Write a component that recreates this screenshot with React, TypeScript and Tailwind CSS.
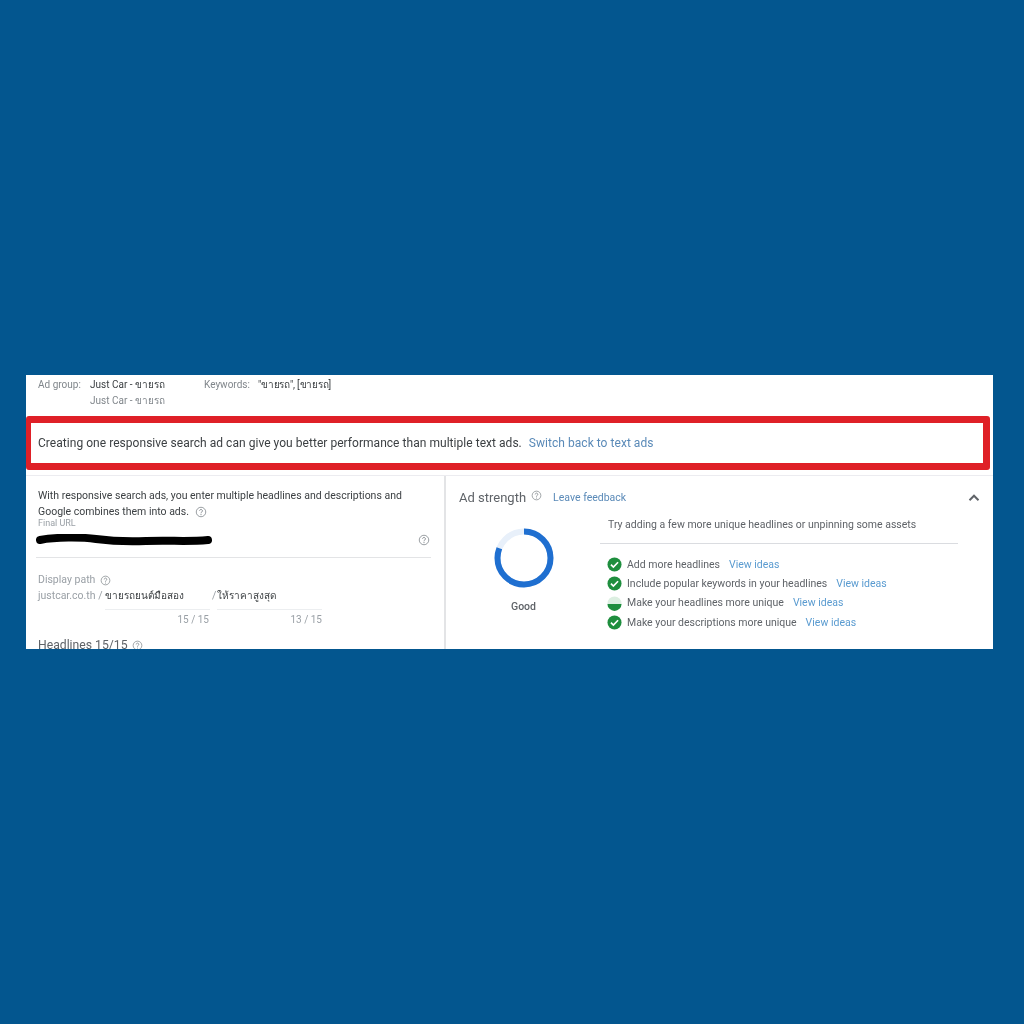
import React from 'react';

const HelpIcon = ({ className }: { className: string }) => (
  <svg viewBox="0 0 24 24" className={className} fill="none" stroke="currentColor">
    <circle cx="12" cy="12" r="9.5" strokeWidth="1.6" />
    <path d="M9.2 9.6a2.8 2.8 0 1 1 4.4 2.3c-1 .7-1.6 1.2-1.6 2.6" strokeWidth="1.8" />
    <circle cx="12" cy="17.2" r="1.1" fill="currentColor" stroke="none" />
  </svg>
);

const CheckIcon = () => (
  <svg viewBox="0 0 16 16" className="w-[15px] h-[15px] shrink-0">
    <circle cx="8" cy="8" r="7.5" fill="#1e8e3e" />
    <path d="M4.2 8.2l2.6 2.6 5-5.2" fill="none" stroke="#fff" strokeWidth="1.8" />
  </svg>
);

const HalfIcon = () => (
  <svg viewBox="0 0 16 16" className="w-[15px] h-[15px] shrink-0">
    <circle cx="8" cy="8" r="7.5" fill="#dcefe1" />
    <path d="M.5 8.4h15a7.5 7.5 0 0 1-15 0z" fill="#1e8e3e" />
  </svg>
);

const checks = [
  { text: 'Add more headlines', half: false },
  { text: 'Include popular keywords in your headlines', half: false },
  { text: 'Make your headlines more unique', half: true },
  { text: 'Make your descriptions more unique', half: false },
];

const App: React.FC = () => {
  return (
    <div className="w-[1024px] h-[1024px] bg-[#03568f] pt-[375px] pl-[26px] font-['Roboto','Noto_Sans_CJK_SC',sans-serif] overflow-hidden">
      <div className="w-[967px] h-[274px] bg-white overflow-hidden blur-[0.5px]">
        {/* ad group row */}
        <div className="h-[41px] pl-[12px] pt-[2px] flex text-[10px] leading-[16px]">
          <span className="w-[52px] text-[#80868b]">Ad group:</span>
          <div className="w-[114px] text-[#3c4043]">
            <div>Just Car - ขายรถ</div>
            <div className="text-[#80868b]">Just Car - ขายรถ</div>
          </div>
          <span className="w-[54px] text-[#80868b]">Keywords:</span>
          <span className="text-[#3c4043] tracking-[-0.2px]">"ขายรถ", [ขายรถ]</span>
        </div>

        {/* red notice */}
        <div className="w-[964px] h-[54px] border-l-[5px] border-r-[7px] border-y-[7px] border-[#df2027] rounded-[3px] pl-[7px] flex items-center text-[12px] text-[#3c4043] tracking-[0.04px]">
          <span>Creating one responsive search ad can give you better performance than multiple text ads.</span>
          <span className="ml-[7px] text-[#5a8ab8]">Switch back to text ads</span>
        </div>

        <div className="flex h-[179px] border-t border-[#ececf0] mt-[5px]">
          {/* left column */}
          <div className="w-[420px] shrink-0 pl-[12px] pr-[11px] pt-[12px] border-r-2 border-[#e3e4e6]">
            <div className="text-[10.5px] leading-[16px] text-[#3c4043] -mb-[2px]">
              With responsive search ads, you enter multiple headlines and descriptions and
              <div className="flex items-center">
                Google combines them into ads.
                <HelpIcon className="w-[12px] h-[12px] ml-[6px] text-[#80868b]" />
              </div>
            </div>
            <div className="text-[9px] leading-[10px] text-[#9aa0a6]">Final URL</div>
            <div className="h-[30px] border-b border-[#e3e4e6] flex items-start justify-between pr-[1px] w-[395px] -ml-[2px]">
              <svg viewBox="0 0 176 12" className="w-[176px] h-[12px] mt-[6px]">
                <path d="M4 6C20 3 45 3 60 5S85 8 110 7s40 1 62 -1" fill="none" stroke="#000" strokeWidth="8" strokeLinecap="round" />
              </svg>
              <HelpIcon className="w-[12px] h-[12px] mt-[6px] text-[#80868b]" />
            </div>
            <div className="flex items-center mt-[15px] text-[10.5px] leading-[14px] text-[#9aa0a6]">
              Display path
              <HelpIcon className="w-[11px] h-[11px] ml-[5px] text-[#80868b]" />
            </div>
            <div className="flex mt-[2px] text-[10.5px] leading-[14px]">
              <span className="w-[67px] shrink-0 text-[#9aa0a6]">justcar.co.th /</span>
              <div className="w-[105px]">
                <div className="font-medium text-[#3c4043] text-[10px]">ขายรถยนต์มือสอง</div>
                <div className="h-[7px] border-b border-[#eceef0]" />
                <div className="text-right text-[10px] leading-[14px] mt-[3px] text-[#9aa0a6] pr-[1px]">15 / 15</div>
              </div>
              <span className="w-[5px] ml-[2px] shrink-0 text-[#9aa0a6]">/</span>
              <div className="w-[105px]">
                <div className="font-medium text-[#3c4043] text-[10px]">ให้ราคาสูงสุด</div>
                <div className="h-[7px] border-b border-[#eceef0]" />
                <div className="text-right text-[10px] leading-[14px] mt-[3px] text-[#9aa0a6]">13 / 15</div>
              </div>
            </div>
            <div className="flex items-center mt-[10px] text-[12.2px] leading-[16px] text-[#5f6368]">
              Headlines 15/15
              <HelpIcon className="w-[11px] h-[11px] ml-[4px] text-[#80868b]" />
            </div>
          </div>

          {/* right column */}
          <div className="flex-1 pl-[13px] pt-[13px] pr-[10px]">
            <div className="flex items-center h-[18px]">
              <span className="text-[13px] text-[#5f6368]">Ad strength</span>
              <HelpIcon className="w-[11px] h-[11px] ml-[5px] -mt-[5px] text-[#80868b]" />
              <span className="ml-[11px] text-[10.5px] text-[#5a8ab8]">Leave feedback</span>
              <svg viewBox="0 0 24 24" className="w-[18px] h-[18px] ml-auto text-[#5f6368]" fill="none" stroke="currentColor" strokeWidth="2.6">
                <path d="M6 15l6-6 6 6" />
              </svg>
            </div>
            <div className="flex">
              <div className="w-[130px] shrink-0 flex flex-col items-center pt-[21px] pr-[1px]">
                <svg viewBox="0 0 60 60" className="w-[60px] h-[60px] -rotate-90">
                  <circle cx="30" cy="30" r="26.5" fill="none" stroke="#e8f0fa" strokeWidth="6" />
                  <circle cx="30" cy="30" r="26.5" fill="none" stroke="#1f6fd0" strokeWidth="6" strokeDasharray="134 167" />
                </svg>
                <div className="mt-[11px] text-[10.5px] font-medium text-[#5f6368]">Good</div>
              </div>
              <div className="w-[358px] ml-[11px]">
                <div className="h-[37px] pt-[10px] border-b border-[#dadce0] pl-[8px] text-[10.5px] leading-[16px] text-[#5f6368]">
                  Try adding a few more unique headlines or unpinning some assets
                </div>
                <div className="mt-[13px] pl-[7px] flex flex-col gap-[4.3px]">
                  {checks.map(c => (
                    <div key={c.text} className="flex items-center h-[15px] text-[10.5px] text-[#5f6368]">
                      {c.half ? <HalfIcon /> : <CheckIcon />}
                      <span className="ml-[5px]">{c.text}</span>
                      <span className="ml-[9px] text-[#5a9bd0]">View ideas</span>
                    </div>
                  ))}
                </div>
              </div>
            </div>
          </div>
        </div>
      </div>
    </div>
  );
};

export default App;
